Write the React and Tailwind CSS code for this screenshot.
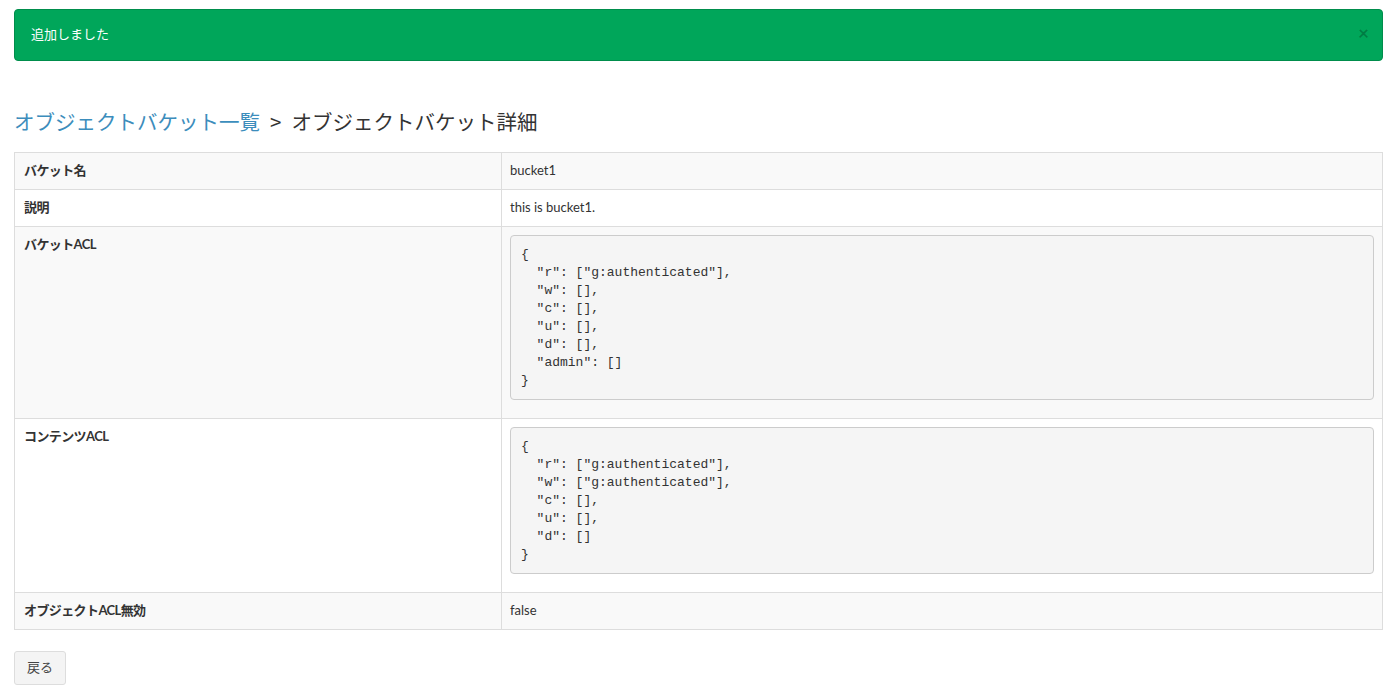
const acl1 = `{
  "r": ["g:authenticated"],
  "w": [],
  "c": [],
  "u": [],
  "d": [],
  "admin": []
}`

const acl2 = `{
  "r": ["g:authenticated"],
  "w": ["g:authenticated"],
  "c": [],
  "u": [],
  "d": []
}`

const Pre = ({ children }) => (
    <pre className="m-0 mt-[1px] mb-[9px] bg-[#f5f5f5] border border-[#ccc] rounded-[4px] px-[10px] pt-[10px] pb-[9px] text-[13px] leading-[18px] text-[#333] font-['Liberation_Mono',monospace] whitespace-pre">
        {children}
    </pre>
)

const rows = [
    { label: 'バケット名', value: 'bucket1' },
    { label: '説明', value: 'this is bucket1.' },
    { label: 'バケットACL', value: <Pre>{acl1}</Pre> },
    { label: 'コンテンツACL', value: <Pre>{acl2}</Pre> },
    { label: 'オブジェクトACL無効', value: 'false' },
]

export default function App() {
    return (
        <div className="min-h-screen bg-white pl-[14px] pr-[8px] pt-[9px] text-[13px] text-[#333] font-['Lato','Noto_Sans_CJK_JP',sans-serif]">
            <div className="flex items-center justify-between h-[52px] bg-[#00a65a] border border-[#008d4c] rounded-[4px] pl-[16px] pr-[13px] text-white text-[13px]">
                <span>追加しました</span>
                <button className="mb-[6px] text-[19px] leading-none text-black/25 font-bold">×</button>
            </div>

            <h1 className="mt-[44px] mb-[15px] flex items-center text-[20.5px] leading-[32px] font-['Noto_Sans_CJK_JP',sans-serif] font-normal">
                <a href="#" className="text-[#3c8dbc]">オブジェクトバケット一覧</a>
                <span className="mx-[10px] text-[#333]">&gt;</span>
                <span className="text-[#333]">オブジェクトバケット詳細</span>
            </h1>

            <table className="w-full border-collapse border border-[#ddd]">
                <tbody>
                    {rows.map((r, i) => (
                        <tr key={i} className={i % 2 === 0 ? 'bg-[#f9f9f9]' : 'bg-white'}>
                            <td className="w-[487px] align-top border border-[#ddd] px-[9px] pt-[7px] pb-[9px] leading-[20px] font-bold tracking-[-0.6px]">
                                {r.label}
                            </td>
                            <td className="align-top border border-[#ddd] px-[8px] pt-[7px] pb-[9px] leading-[20px]">
                                {r.value}
                            </td>
                        </tr>
                    ))}
                </tbody>
            </table>

            <button className="mt-[21px] h-[34px] px-[12px] bg-[#f4f4f4] border border-[#ddd] rounded-[3px] text-[13px] text-[#444]">
                戻る
            </button>
        </div>
    )
}
